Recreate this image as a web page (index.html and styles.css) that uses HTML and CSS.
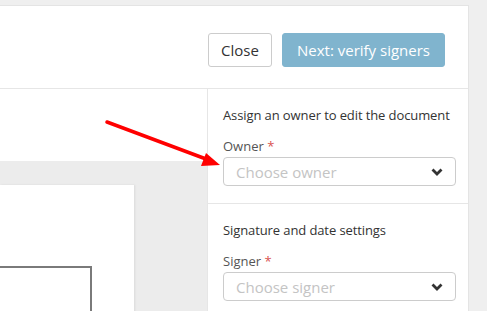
FILE: index.html
```html
<!DOCTYPE html>
<html lang="en">
<head>
  <meta charset="UTF-8">
  <meta name="viewport" content="width=device-width, initial-scale=1.0">
  <title>Prepare document</title>
  <link rel="stylesheet" href="styles.css">
</head>
<body>
  <div class="panel">
    <div class="header">
      <button type="button" class="btn btn-default">Close</button>
      <button type="button" class="btn btn-primary">Next: verify signers</button>
    </div>

    <div class="content">
      <div class="main">
        <div class="viewer">
          <div class="page">
            <div class="field-box"></div>
          </div>
        </div>
      </div>

      <div class="sidebar">
        <div class="section">
          <p class="section-title">Assign an owner to edit the document</p>
          <label class="field-label">Owner <span class="req">*</span></label>
          <div class="select">
            <span class="placeholder">Choose owner</span>
            <svg class="chevron" width="12" height="8" viewBox="0 0 12 8"><path d="M1.5 1.5 L6 6 L10.5 1.5" fill="none" stroke="#333" stroke-width="2.8"/></svg>
          </div>
        </div>
        <div class="section section-next">
          <p class="section-title">Signature and date settings</p>
          <label class="field-label">Signer <span class="req">*</span></label>
          <div class="select">
            <span class="placeholder">Choose signer</span>
            <svg class="chevron" width="12" height="8" viewBox="0 0 12 8"><path d="M1.5 1.5 L6 6 L10.5 1.5" fill="none" stroke="#333" stroke-width="2.8"/></svg>
          </div>
        </div>
      </div>
    </div>

    <svg class="arrow" width="487" height="311" viewBox="0 0 487 311">
      <line x1="107" y1="122" x2="206" y2="159" stroke="#ff0000" stroke-width="3.5" stroke-linecap="round"/>
      <polygon points="220,165 201,166 206,153" fill="#ff0000"/>
    </svg>
  </div>
</body>
</html>
```

FILE: styles.css
```css
body {
  margin: 0;
  background: #efefef;
  font-family: "Open Sans", "Noto Sans", sans-serif;
  color: #333;
  overflow: hidden;
}
.panel {
  margin-top: 5px;
  width: 469px;
  height: 306px;
  background: #fff;
  border: 1px solid #e4e4e4;
  border-left: none;
  border-bottom: none;
  box-sizing: border-box;
  display: flex;
  flex-direction: column;
}
.header {
  height: 83px;
  flex-shrink: 0;
  display: flex;
  justify-content: flex-end;
  align-items: flex-start;
  gap: 10px;
  padding: 27px 23px 0 0;
  box-sizing: border-box;
  border-bottom: 1px solid #e6e6e6;
}
.btn {
  height: 34px;
  padding: 0 12px;
  font-family: inherit;
  font-size: 15px;
  border-radius: 3px;
  cursor: pointer;
}
.btn-default {
  width: 64px;
  background: #fff;
  color: #333;
  border: 1px solid #ccc;
}
.btn-primary {
  width: 163px;
  background: #80b4ce;
  color: #fff;
  border: 1px solid #80b4ce;
}
.content {
  flex: 1;
  display: flex;
  min-height: 0;
}
.main {
  flex: 1;
  display: flex;
  flex-direction: column;
  padding-top: 72px;
}
.viewer {
  flex: 1;
  background: #ececec;
  padding-top: 24px;
  overflow: hidden;
}
.page {
  width: 134px;
  height: 200px;
  background: #fff;
  box-shadow: 1px 0 2px rgba(0, 0, 0, 0.08);
  padding-top: 81px;
  box-sizing: border-box;
}
.field-box {
  width: 92px;
  height: 80px;
  border-top: 2px solid #7a7a7a;
  border-right: 2px solid #7a7a7a;
  box-sizing: border-box;
}
.sidebar {
  width: 261px;
  flex-shrink: 0;
  border-left: 1px solid #e6e6e6;
  box-sizing: border-box;
}
.section {
  padding: 16px 12px 17px 15px;
  border-bottom: 1px solid #e6e6e6;
}
.section-next {
  padding-top: 16px;
}
.section-title {
  margin: 0 0 12px;
  font-size: 13px;
  letter-spacing: -0.1px;
  line-height: 20px;
}
.field-label {
  display: block;
  font-size: 13px;
  line-height: 18px;
  color: #555;
  margin-bottom: 2px;
}
.req {
  color: #d9534f;
}
.select {
  height: 29px;
  border: 1px solid #ccc;
  border-radius: 4px;
  display: flex;
  align-items: center;
  justify-content: space-between;
  padding: 0 12px;
  box-sizing: border-box;
}
.placeholder {
  font-size: 15px;
  color: #c4c4c4;
}
.arrow {
  position: absolute;
  left: 0;
  top: 0;
  pointer-events: none;
}
```
